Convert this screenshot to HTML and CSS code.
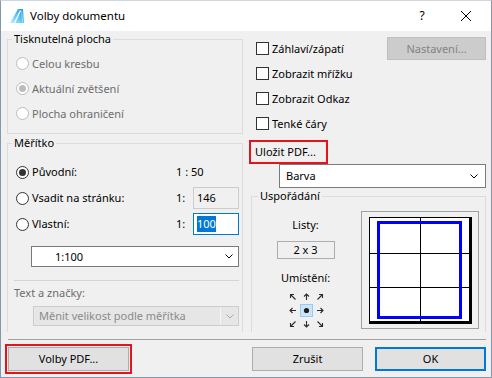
FILE: index.html
```html
<!DOCTYPE html>
<html lang="cs">
<head>
<meta charset="utf-8">
<title>Volby dokumentu</title>
<link rel="stylesheet" href="styles.css">
</head>
<body>
<div class="window">
  <div class="titlebar">
    <svg class="app-icon" viewBox="0 0 16 16" width="16" height="16">
      <defs>
        <linearGradient id="ag" x1="0" y1="1" x2="1" y2="0">
          <stop offset="0" stop-color="#c4ecfb"/>
          <stop offset="0.5" stop-color="#5cc6f2"/>
          <stop offset="1" stop-color="#1596d8"/>
        </linearGradient>
      </defs>
      <polygon points="1,15 9,1 14,1 15,15" fill="url(#ag)"/>
      <path d="M5.5 15L11.5 2.5" stroke="#fff" stroke-width="1.2"/>
      <path d="M12.6 2.5L13.6 15" stroke="#ffffff" stroke-opacity="0.5" stroke-width="0.8"/>
    </svg>
    <span class="title">Volby dokumentu</span>
    <span class="tb-btn">?</span>
    <span class="tb-btn">
      <svg width="10" height="10" viewBox="0 0 10 10"><path d="M0 0L10 10M10 0L0 10" stroke="#000" stroke-width="1"/></svg>
    </span>
  </div>
  <div class="client">
    <div class="columns">
      <div class="col-left">
        <div class="group g-area">
          <div class="legend">Tisknutelná plocha</div>
          <div class="rows">
            <div class="opt disabled"><span class="radio"></span>Celou kresbu</div>
            <div class="opt disabled"><span class="radio on"></span>Aktuální zvětšení</div>
            <div class="opt disabled"><span class="radio"></span>Plocha ohraničení</div>
          </div>
        </div>
        <div class="group g-scale">
          <div class="legend">Měřítko</div>
          <div class="scale-rows">
            <div class="scale-row">
              <div class="opt"><span class="radio on"></span>Původní:</div>
              <span class="ratio">1 : 50</span>
            </div>
            <div class="scale-row">
              <div class="opt"><span class="radio"></span>Vsadit na stránku:</div>
              <span class="one">1:</span>
              <span class="field ro">146</span>
            </div>
            <div class="scale-row">
              <div class="opt"><span class="radio"></span>Vlastní:</div>
              <span class="one">1:</span>
              <span class="field focus"><span class="sel">100</span></span>
            </div>
          </div>
          <div class="select s-scale"><span>1:100</span><svg class="chev" width="8" height="5" viewBox="0 0 8 5"><path d="M0.5 0.5L4 4L7.5 0.5" fill="none" stroke="#000"/></svg></div>
          <div class="sep"></div>
          <div class="label-dis">Text a značky:</div>
          <div class="select s-dis"><span class="txt">Měnit velikost podle měřítka</span><span class="arr"><svg class="chev" width="8" height="5" viewBox="0 0 8 5"><path d="M0.5 0.5L4 4L7.5 0.5" fill="none" stroke="#a8a8a8"/></svg></span></div>
        </div>
      </div>
      <div class="col-right">
        <div class="check-row"><span class="check"></span>Záhlaví/zápatí<button class="btn disabled nast">Nastavení...</button></div>
        <div class="check-row"><span class="check"></span>Zobrazit mřížku</div>
        <div class="check-row"><span class="check"></span>Zobrazit Odkaz</div>
        <div class="check-row"><span class="check"></span>Tenké čáry</div>
        <div class="pdf-hl">Uložit PDF...</div>
        <div class="select s-color"><span>Barva</span><svg class="chev" width="8" height="5" viewBox="0 0 8 5"><path d="M0.5 0.5L4 4L7.5 0.5" fill="none" stroke="#000"/></svg></div>
        <div class="group g-layout">
          <div class="legend">Uspořádání</div>
          <div class="layout-body">
            <div class="layout-ctrls">
              <div class="lbl">Listy:</div>
              <div class="sheets">2 x 3</div>
              <div class="lbl lbl-pos">Umístění:</div>
              <svg class="arrows" width="40" height="40" viewBox="0 0 40 40">
                <g fill="none" stroke="#2b2b2b" stroke-width="1.1">
                  <path d="M9.5 9.5L4.5 4.5M4.5 8V4.5H8"/>
                  <path d="M20.5 10V4M18 6.5L20.5 4L23 6.5"/>
                  <path d="M31.5 9.5L36.5 4.5M33 4.5H36.5V8"/>
                  <path d="M10 20.5H4M6.5 18L4 20.5L6.5 23"/>
                  <path d="M31 20.5H37M34.5 18L37 20.5L34.5 23"/>
                  <path d="M9.5 31.5L4.5 36.5M4.5 33V36.5H8"/>
                  <path d="M20.5 31V37M18 34.5L20.5 37L23 34.5"/>
                  <path d="M31.5 31.5L36.5 36.5M33 36.5H36.5V33"/>
                </g>
                <rect x="14.5" y="14.5" width="12" height="12" fill="#cce4f7" stroke="#99c9ef"/>
                <circle cx="20.5" cy="20.5" r="2.6" fill="#1e1e1e"/>
              </svg>
            </div>
            <svg class="preview" width="118" height="118" viewBox="0 0 118 118">
              <rect x="0.5" y="0.5" width="117" height="117" fill="#f0f0f0" stroke="#a0a0a0"/>
              <rect x="8" y="6" width="103" height="107" fill="#000"/>
              <rect x="9" y="7" width="99" height="103" fill="#fff"/>
              <path d="M59.5 7V110M9 42.5H108M9 76.5H108" stroke="#000" stroke-width="1"/>
              <rect x="17.5" y="11.5" width="82" height="95" fill="none" stroke="#0000ff" stroke-width="3"/>
            </svg>
          </div>
        </div>
      </div>
    </div>
    <div class="footer-sep"></div>
    <div class="footer">
      <div class="btn-hl"><button class="btn pdf">Volby PDF...</button></div>
      <button class="btn cancel">Zrušit</button>
      <button class="btn ok">OK</button>
    </div>
  </div>
</div>
</body>
</html>
```
FILE: styles.css
```css
* { box-sizing: border-box; }
html, body { margin: 0; padding: 0; }
body {
  width: 492px;
  height: 378px;
  overflow: hidden;
  font-family: "Noto Sans", "DejaVu Sans", sans-serif;
  font-size: 11px;
  line-height: 16px;
  color: #000;
  background: #fff;
}
.window {
  width: 492px;
  height: 378px;
  border: 1px solid #8497ad;
  border-top-color: #cfd6de;
  display: flex;
  flex-direction: column;
  background: #f0f0f0;
}
.titlebar {
  flex: none;
  height: 30px;
  background: #fff;
  display: flex;
  align-items: center;
}
.app-icon { margin: 0 5px 0 8px; flex: none; }
.title { flex: 1; font-size: 11.5px; }
.tb-btn {
  width: 44px;
  height: 30px;
  display: flex;
  align-items: center;
  justify-content: center;
  font-size: 12px;
}
.tb-btn:last-child { margin-right: 3px; }

.client {
  flex: 1;
  padding: 0 5px 0 6px;
  display: flex;
  flex-direction: column;
}
.columns {
  height: 301px;
  display: grid;
  grid-template-columns: 236px 235px;
  column-gap: 8px;
}
.col-left {
  display: flex;
  flex-direction: column;
  padding-top: 8px;
}
.group {
  border: 1px solid #dcdcdc;
}
.legend {
  width: max-content;
  margin: -9px 0 0 -4px;
  padding: 0 2px;
  line-height: 16px;
  background: #f0f0f0;
}
.g-area {
  height: 95px;
  padding-left: 8px;
}
.rows { margin-top: 4px; }
.opt {
  height: 25px;
  display: flex;
  align-items: center;
  white-space: nowrap;
}
.opt.disabled { color: #6d6d6d; }
.radio {
  width: 13px;
  height: 13px;
  border: 1px solid #333;
  border-radius: 50%;
  background: #fff;
  margin-right: 3px;
  flex: none;
  display: flex;
  align-items: center;
  justify-content: center;
}
.radio.on::after {
  content: "";
  width: 7px;
  height: 7px;
  border-radius: 50%;
  background: #333;
}
.disabled .radio { border-color: #bcbcbc; }
.disabled .radio.on::after { background: #bcbcbc; }

.g-scale {
  margin-top: 9px;
  flex: 1;
  border-bottom: none;
  padding: 0 3px 0 8px;
  display: flex;
  flex-direction: column;
}
.scale-rows { margin-top: 8px; }
.scale-row {
  height: 26px;
  display: grid;
  grid-template-columns: 160px 17px 46px;
  align-items: center;
}
.scale-row .opt { height: 26px; }
.ratio { grid-column: 2 / 4; }
.field {
  height: 22px;
  display: flex;
  align-items: center;
  padding-left: 3px;
  border: 1px solid #cccccc;
}
.field.ro { background: #f0f0f0; }
.field.focus { background: #fff; border-color: #0078d7; }
.sel { background: #0078d7; color: #fff; line-height: 16px; }

.select {
  display: flex;
  align-items: center;
  justify-content: space-between;
  background: #fff;
  border: 1px solid #7a7a7a;
}
.chev { flex: none; }
.s-scale {
  margin: 9px 0 0 15px;
  height: 21px;
  padding: 0 5px 0 23px;
}
.sep {
  margin: 13px 0 0 -2px;
  height: 1px;
  background: #d4d4d4;
}
.label-dis {
  margin: 4px 0 0 -2px;
  color: #6d6d6d;
}
.s-dis {
  margin: 5px 0 0 17px;
  height: 20px;
  background: #e6e6e6;
  border-color: #cccccc;
  color: #8a8a8a;
  padding-left: 5px;
}
.s-dis .txt { flex: 1; }
.s-dis .arr {
  width: 18px;
  height: 18px;
  border-left: 1px solid #f4f4f4;
  display: flex;
  align-items: center;
  justify-content: center;
}

.col-right {
  display: flex;
  flex-direction: column;
  padding-top: 5px;
}
.check-row {
  height: 25px;
  display: flex;
  align-items: center;
  padding-left: 5px;
  white-space: nowrap;
}
.check {
  width: 13px;
  height: 13px;
  border: 1px solid #333;
  background: #fff;
  margin-right: 3px;
  flex: none;
}
.btn {
  font: inherit;
  color: #000;
  background: #e1e1e1;
  border: 1px solid #adadad;
  padding: 0;
  height: 24px;
  line-height: 16px;
}
.btn.disabled {
  background: #cccccc;
  border-color: #bfbfbf;
  color: #838383;
}
.nast {
  margin-left: auto;
  width: 99px;
  height: 23px;
}
.pdf-hl {
  margin: 4px 0 0 -2px;
  width: 79px;
  height: 24px;
  border: 2px solid #e8121b;
  padding-left: 4px;
  line-height: 19px;
  white-space: nowrap;
}
.s-color {
  margin-left: 28px;
  height: 24px;
  padding: 0 7px 0 6px;
}
.g-layout {
  margin-top: 8px;
  flex: 1;
  border-bottom: none;
  padding: 0 6px 0 0;
}
.g-layout .legend { margin-left: 6px; }
.layout-body {
  margin-top: 7px;
  display: flex;
}
.layout-ctrls {
  flex: 1;
  display: flex;
  flex-direction: column;
  align-items: center;
  padding-right: 2px;
}
.lbl { margin-top: 6px; }
.sheets {
  margin-top: 8px;
  width: 58px;
  height: 18px;
  border: 1px solid #adadad;
  text-align: center;
  line-height: 16px;
}
.lbl-pos { margin-top: 11px; }
.arrows { margin-top: 4px; }
.preview { flex: none; }

.footer-sep {
  margin: 7px 0 0 1px;
  height: 1px;
  background: #a0a0a0;
}
.footer {
  margin-top: 4px;
  display: flex;
  align-items: center;
}
.btn-hl {
  margin-left: -2px;
  border: 2px solid #e8121b;
  padding: 1px;
}
.pdf { width: 121px; display: block; }
.cancel { margin-left: auto; width: 111px; }
.ok {
  margin-left: 12px;
  width: 111px;
  border: 2px solid #0078d7;
}
```
